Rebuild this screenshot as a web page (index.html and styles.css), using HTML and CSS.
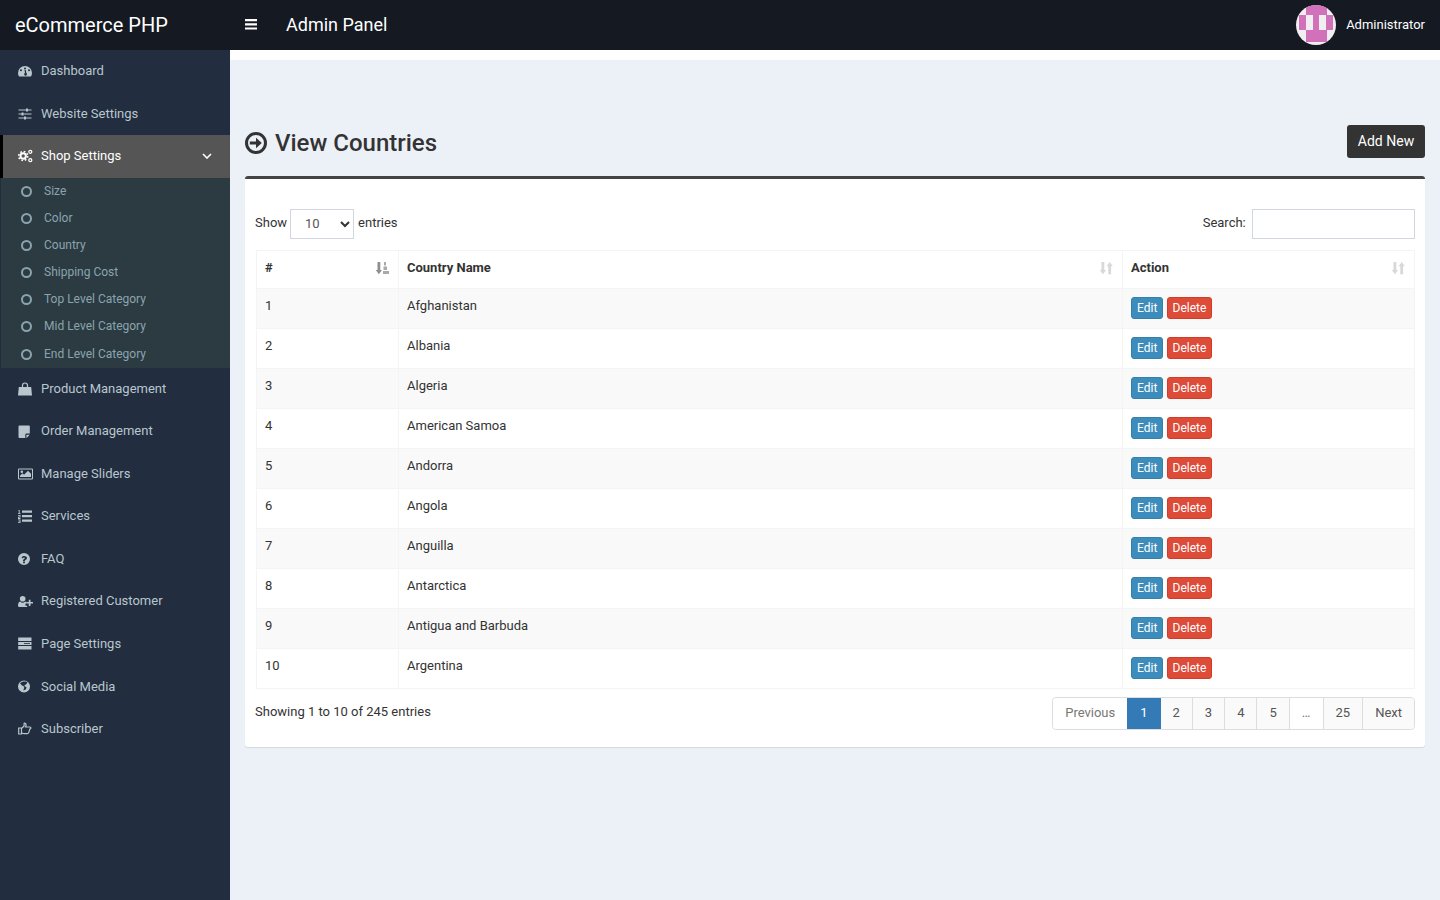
FILE: index.html
```html
<!DOCTYPE html>
<html lang="en">
<head>
  <meta charset="UTF-8" />
  <meta name="viewport" content="width=device-width, initial-scale=1.0" />
  <title>View Countries</title>
  <link rel="stylesheet" href="styles.css">
</head>
<body>
  <header class="topbar">
    <div class="logo">eCommerce PHP</div>
    <div class="topbar-main">
      <svg class="burger" viewBox="0 0 12 11"><path d="M0 0h12v2.200H0zM0 4.200h12v2.200H0zM0 8.400h12v2.200H0z"/></svg>
      <span class="panel-title">Admin Panel</span>
      <div class="user">
        <svg class="avatar" viewBox="0 0 40 40">
          <clipPath id="avatarClip"><circle cx="20" cy="20" r="20"/></clipPath>
          <circle cx="20" cy="20" r="20" fill="#f1eef1"/>
          <path clip-path="url(#avatarClip)" fill="#d071b9" d="M10 0h21v10h6v15h-7V10h-7v15h-6V10h-7v15H3V10h7zM10 25h21v12H10z"/>
        </svg>
        <span>Administrator</span>
      </div>
    </div>
  </header>

  <div class="layout">
    <aside class="sidebar">
      <ul class="menu">
        <li><a href="#"><svg class="ico" viewBox="0 0 14 14"><path d="M7 2a7 7 0 0 0-7 7c0 1.300.3 2.400 1 3.400h12c.7-1 1-2.100 1-3.400a7 7 0 0 0-7-7zM3 5.200a1 1 0 1 1 0 2 1 1 0 0 1 0-2zm4-1.600a1 1 0 1 1 0 2 1 1 0 0 1 0-2zm4 1.600a1 1 0 1 1 0 2 1 1 0 0 1 0-2zM7.800 6 8.300 9a1.400 1.400 0 1 1-1.300-.1L6.600 6z" fill-rule="evenodd"/></svg>Dashboard</a></li>
        <li><a href="#"><svg class="ico" viewBox="0 0 14 14"><path d="M.5 2.400h13v1.200H.5zM.5 6.400h13v1.200H.5zM.5 10.400h13v1.200H.5z"/><path d="M8 1.500h2v3H8zM3.500 5.500h2v3h-2zM6 9.500h2v3H6z"/></svg>Website Settings</a></li>
        <li class="open">
          <a href="#"><svg class="ico ico-gears" viewBox="0 0 15 14"><g fill="none" stroke="#fff"><circle cx="5.200" cy="7" r="2.700" stroke-width="2"/><circle cx="5.200" cy="7" r="4.500" stroke-width="1.600" stroke-dasharray="1.700 1.830"/><circle cx="12.300" cy="2.800" r="1.500" stroke-width="1.300"/><circle cx="12.300" cy="11.200" r="1.500" stroke-width="1.300"/></g></svg>Shop Settings<svg class="chev" viewBox="0 0 10 6"><path d="M1 1l4 4 4-4" fill="none" stroke="#fff" stroke-width="1.600"/></svg></a>
          <ul class="submenu">
            <li><a href="#"><i class="ring"></i>Size</a></li>
            <li><a href="#"><i class="ring"></i>Color</a></li>
            <li><a href="#"><i class="ring"></i>Country</a></li>
            <li><a href="#"><i class="ring"></i>Shipping Cost</a></li>
            <li><a href="#"><i class="ring"></i>Top Level Category</a></li>
            <li><a href="#"><i class="ring"></i>Mid Level Category</a></li>
            <li><a href="#"><i class="ring"></i>End Level Category</a></li>
          </ul>
        </li>
        <li><a href="#"><svg class="ico" viewBox="0 0 14 14"><path d="M.8 5h12.400l.8 8.500H0z"/><path d="M4.500 5V3.500a2.500 2.500 0 0 1 5 0V5" fill="none" stroke="#b8c7ce" stroke-width="1.200"/></svg>Product Management</a></li>
        <li><a href="#"><svg class="ico" viewBox="0 0 14 14"><path d="M.5 1.500a1 1 0 0 1 1-1H11a.8.8 0 0 1 .8.800v7.200H8.500a1.200 1.200 0 0 0-1.200 1.200v3.300H1.500a1 1 0 0 1-1-1zM8.400 13.200V9.800h3.300z"/></svg>Order Management</a></li>
        <li><a href="#"><svg class="ico ico-wide" viewBox="0 0 15 14"><path d="M1 1.500h13a1 1 0 0 1 1 1v9a1 1 0 0 1-1 1H1a1 1 0 0 1-1-1v-9a1 1 0 0 1 1-1zm0 1v9h13v-9zM2 10V8.800L4.500 6.300 6 7.800l4-4 3 3V10zM3.800 3.500a1.300 1.300 0 1 1 0 2.600 1.300 1.300 0 0 1 0-2.600z" fill-rule="evenodd"/></svg>Manage Sliders</a></li>
        <li><a href="#"><svg class="ico" viewBox="0 1 14 14"><path d="M4 1.500h10v2.200H4zM4 6h10v2.200H4zM4 10.500h10v2.200H4zM.4 1h1.300v3.200h.8V5H0v-.8h.8V1.800H.4zM0 6h2.500v2.400H.9v.7h1.600V10H0V7.700h1.600v-.9H0zM0 10.500h2.500V14H0v-.7h1.600v-.7H.6V12h1v-.7H0z"/></svg>Services</a></li>
        <li><a href="#"><svg class="ico" viewBox="0 0 14 14"><path d="M6 1a6 6 0 1 1 0 12A6 6 0 0 1 6 1zM5.100 9.600v1.700h1.800V9.600zM3.500 5.600l1.300.8c.3-.6.600-1 1.200-1 .5 0 .9.300.9.700 0 .5-.4.700-.9 1-.6.4-1 .9-1 1.600v.3h1.900c0-.6.200-.9.800-1.200.7-.5 1.300-1 1.300-1.900C9 4.800 7.500 4 6.100 4c-1.200 0-2 .5-2.600 1.600z" fill-rule="evenodd"/></svg>FAQ</a></li>
        <li><a href="#"><svg class="ico ico-wide" viewBox="0 1 16 14"><path d="M5 1.500a3 3 0 1 1 0 6 3 3 0 0 1 0-6zM0 12.500c0-3 .6-4.700 2.300-5a3.800 3.800 0 0 0 5.400 0c.6.100 1.100.4 1.500.9v1.100H8v2.500h1.800v1.200H1z"/><path d="M11.500 5.500h1.800v2.400H16v1.800h-2.700v2.500h-1.800V9.700H9V7.900h2.500z"/></svg>Registered Customer</a></li>
        <li><a href="#"><svg class="ico" viewBox="0 .5 14 14"><path d="M.2 1h13.300v3.500H.2zM.2 5.500h13.300v3H.2zM.2 9.500h13.300V13H.2z"/><path d="M6 6.600h6v.8H6z" fill="#222d3f"/></svg>Page Settings</a></li>
        <li><a href="#"><svg class="ico" viewBox="0 .5 14 14"><path d="M6 1a6 6 0 1 1 0 12A6 6 0 0 1 6 1zM2 4c1 .5 1.200 1.500 2.200 2 1 .6 2 .8 2 2s-.8 1.500-.7 3c1.500-.3 3-1.500 3-3 0-1-1.500-.8-2-1.500-.4-.6.5-1 1.500-1.500L9.500 3C8 1.700 4 1.500 2 4z" fill-rule="evenodd"/></svg>Social Media</a></li>
        <li><a href="#"><svg class="ico" viewBox="0 .5 14 14"><path d="M.7 6.500h2.800v6H.7zM3.500 7l2.600-2.600V2c0-.7 2-.6 2 1.500 0 .8-.4 1.400-.6 2H12c1.200 0 1.200 2-.2 2-.3 1.500-.7 2.300-1.100 3.600-.3.8-.8 1-1.500 1H5.800c-1 0-1.500-.6-2.300-.7" fill="none" stroke="#b8c7ce" stroke-width="1.200"/></svg>Subscriber</a></li>
      </ul>
    </aside>

    <main class="content">
      <div class="page-head">
        <h1><svg class="head-ico" viewBox="0 0 24 24"><circle cx="12" cy="12" r="9.500" fill="none" stroke="#333" stroke-width="3"/><path d="M5.800 10.400H12V6.800l5.800 5.200-5.800 5.200v-3.600H5.800z" fill="#333"/></svg>View Countries</h1>
        <a class="btn-add" href="#">Add New</a>
      </div>

      <section class="box">
        <div class="table-top">
          <label class="length-label">Show
            <select class="length"><option>10</option></select>
            entries</label>
          <label class="search">Search: <input type="text" /></label>
        </div>

        <table class="data">
          <colgroup><col class="col-num"><col class="col-name"><col></colgroup>
          <thead>
            <tr>
              <th># <svg class="sort sort-on" viewBox="0 0 14 14"><path d="M2.500 1h2.800v8h1.700L3.900 13.200.8 9h1.700z" fill="#8f8f8f"/><path d="M9 1h2v3.500H9zM8.500 5.500h3.500V9H8.500zM8 10h6v3H8z" fill="#aaa"/></svg></th>
              <th>Country Name <svg class="sort" viewBox="0 0 14 14"><path d="M2.500 1h2.800v8h1.700L3.900 13.200.8 9h1.700zM9.300 13.200v-8H7.600L10.700 1l3.100 4.200h-1.700v8z"/></svg></th>
              <th>Action <svg class="sort" viewBox="0 0 14 14"><path d="M2.500 1h2.800v8h1.700L3.900 13.200.8 9h1.700zM9.300 13.200v-8H7.600L10.700 1l3.100 4.200h-1.700v8z"/></svg></th>
            </tr>
          </thead>
          <tbody>
            <tr><td>1</td><td>Afghanistan</td><td><a class="btn edit" href="#">Edit</a> <a class="btn del" href="#">Delete</a></td></tr>
            <tr><td>2</td><td>Albania</td><td><a class="btn edit" href="#">Edit</a> <a class="btn del" href="#">Delete</a></td></tr>
            <tr><td>3</td><td>Algeria</td><td><a class="btn edit" href="#">Edit</a> <a class="btn del" href="#">Delete</a></td></tr>
            <tr><td>4</td><td>American Samoa</td><td><a class="btn edit" href="#">Edit</a> <a class="btn del" href="#">Delete</a></td></tr>
            <tr><td>5</td><td>Andorra</td><td><a class="btn edit" href="#">Edit</a> <a class="btn del" href="#">Delete</a></td></tr>
            <tr><td>6</td><td>Angola</td><td><a class="btn edit" href="#">Edit</a> <a class="btn del" href="#">Delete</a></td></tr>
            <tr><td>7</td><td>Anguilla</td><td><a class="btn edit" href="#">Edit</a> <a class="btn del" href="#">Delete</a></td></tr>
            <tr><td>8</td><td>Antarctica</td><td><a class="btn edit" href="#">Edit</a> <a class="btn del" href="#">Delete</a></td></tr>
            <tr><td>9</td><td>Antigua and Barbuda</td><td><a class="btn edit" href="#">Edit</a> <a class="btn del" href="#">Delete</a></td></tr>
            <tr><td>10</td><td>Argentina</td><td><a class="btn edit" href="#">Edit</a> <a class="btn del" href="#">Delete</a></td></tr>
          </tbody>
        </table>

        <div class="table-bottom">
          <div class="info">Showing 1 to 10 of 245 entries</div>
          <ul class="pagination">
            <li class="off"><a href="#">Previous</a></li>
            <li class="active"><a href="#">1</a></li>
            <li><a href="#">2</a></li>
            <li><a href="#">3</a></li>
            <li><a href="#">4</a></li>
            <li><a href="#">5</a></li>
            <li class="off"><a href="#">…</a></li>
            <li><a href="#">25</a></li>
            <li><a href="#">Next</a></li>
          </ul>
        </div>
      </section>
    </main>
  </div>
</body>
</html>
```

FILE: styles.css
```css
/* General */
* {
  box-sizing: border-box;
}

body {
  margin: 0;
  font-family: Roboto, "Liberation Sans", sans-serif;
  font-size: 14px;
  line-height: 20px;
  color: #333;
  background: #ecf0f7;
}

a {
  text-decoration: none;
  color: inherit;
}

ul {
  list-style: none;
  margin: 0;
  padding: 0;
}

/* Top bar */
.topbar {
  display: flex;
  height: 50px;
  background: #141922;
  color: #fff;
}

.logo {
  width: 230px;
  padding-left: 15px;
  font-size: 20px;
  line-height: 50px;
}

.topbar-main {
  flex: 1;
  display: flex;
  align-items: center;
  padding: 0 15px;
}

.burger {
  width: 12px;
  height: 11px;
  fill: #fff;
  margin: 0 29px 2px 0;
}

.panel-title {
  font-size: 18px;
}

.user {
  margin-left: auto;
  display: flex;
  align-items: center;
  gap: 10px;
  font-size: 13px;
}

.avatar {
  width: 40px;
  height: 40px;
}

/* Sidebar */
.layout {
  display: flex;
  min-height: 850px;
}

.sidebar {
  width: 230px;
  flex-shrink: 0;
  background: #222d3f;
}

.menu > li > a {
  display: flex;
  align-items: center;
  padding: 12px 0 12px 18px;
  font-size: 13px;
  line-height: 18.57px;
  color: #b8c7ce;
}

.ico {
  width: 14px;
  height: 14px;
  fill: #b8c7ce;
  margin-right: 9px;
  flex-shrink: 0;
}

.ico-wide {
  width: 15px;
  margin-right: 8px;
}

.menu > .open > a {
  background: #555;
  color: #fff;
  border-left: 3px solid #000;
  padding-left: 15px;
}

.open .ico {
  fill: #fff;
}

.ico-gears {
  width: 15px;
  margin-right: 8px;
}

.chev {
  width: 10px;
  height: 6px;
  margin-left: auto;
  margin-right: 18px;
}

.submenu {
  background: #2c3b41;
  margin-left: 1px;
}

.submenu a {
  display: flex;
  align-items: center;
  padding: 5px 0 5px 20px;
  font-size: 12px;
  line-height: 17.14px;
  color: #8aa4af;
}

.ring {
  width: 11px;
  height: 11px;
  border: 2px solid #8aa4af;
  border-radius: 50%;
  margin-right: 12px;
}

/* Content */
.content {
  flex: 1;
  min-width: 0;
  border-top: 10px solid #fff;
  padding: 0 15px;
}

.page-head {
  display: flex;
  justify-content: space-between;
  align-items: flex-end;
  height: 98px;
  margin-bottom: 18px;
}

h1 {
  display: flex;
  align-items: center;
  gap: 7px;
  margin: 0 0 0 -1px;
  font-size: 24px;
  font-weight: 500;
  line-height: 30px;
}

.head-ico {
  width: 24px;
  height: 24px;
}

.btn-add {
  display: block;
  width: 78px;
  height: 33px;
  line-height: 32px;
  text-align: center;
  background: #333;
  border-radius: 3px;
  color: #fff;
}

.box {
  background: #fff;
  border-top: 3px solid #444;
  border-radius: 3px;
  box-shadow: 0 1px 1px rgba(0, 0, 0, 0.1);
  padding: 30px 10px 17px;
  height: 571px;
}

.table-top {
  display: flex;
  justify-content: space-between;
  align-items: center;
  height: 30px;
  font-size: 13px;
  margin-bottom: 11px;
}

.length-label {
  display: flex;
  align-items: center;
  gap: 3px;
  height: 30px;
  padding-bottom: 3px;
}

.length {
  appearance: none;
  flex-shrink: 0;
  width: 64px;
  height: 30px;
  margin: 0 1px -3px 0;
  padding-left: 14px;
  font: inherit;
  color: #555;
  background: #fff url("data:image/svg+xml,%3Csvg xmlns='http://www.w3.org/2000/svg' viewBox='0 0 10 7'%3E%3Cpath d='M1 1l4 4 4-4' fill='none' stroke='%23333' stroke-width='2'/%3E%3C/svg%3E") no-repeat right 3px center / 10px 7px;
  border: 1px solid #d2d6de;
}

.search input {
  width: 163px;
  height: 30px;
  margin-left: 3px;
  border: 1px solid #d2d6de;
  vertical-align: middle;
}

/* Table */
.data {
  width: calc(100% - 1px);
  margin-left: 1px;
  table-layout: fixed;
  border-collapse: collapse;
  border: 1px solid #f4f4f4;
  font-size: 13px;
}

.col-num {
  width: 142px;
}

.col-name {
  width: 724px;
}

.data th,
.data td {
  border: 1px solid #f4f4f4;
  padding: 7px 8px;
  text-align: left;
  vertical-align: top;
}

.data th {
  position: relative;
  height: 38px;
  font-weight: 700;
}

.data td {
  height: 40px;
}

.data td:last-child {
  padding-top: 8px;
}

.data tbody tr:nth-child(odd) {
  background: #f9f9f9;
}

.sort {
  position: absolute;
  right: 9px;
  top: 10px;
  width: 14px;
  height: 14px;
  fill: #d8d8d8;
}

.btn {
  display: inline-block;
  height: 22px;
  padding: 0 5px;
  font-size: 12px;
  line-height: 20px;
  color: #fff;
  border: 1px solid;
  border-radius: 3px;
}

.edit {
  background: #3c8dbc;
  border-color: #367fa9;
}

.del {
  background: #dd4b39;
  border-color: #d73925;
}

/* Footer row */
.table-bottom {
  display: flex;
  justify-content: space-between;
  margin-top: 8px;
  font-size: 13px;
}

.info {
  padding-top: 5px;
}

.pagination {
  display: flex;
  height: 33px;
  border: 1px solid #ddd;
  border-radius: 4px;
  color: #555;
}

.pagination li {
  border-left: 1px solid #ddd;
  background: #fafafa;
}

.pagination li:first-child {
  border-left: 0;
  border-radius: 4px 0 0 4px;
}

.pagination li:last-child {
  border-radius: 0 4px 4px 0;
}

.pagination a {
  display: block;
  padding: 0 12px;
  line-height: 29px;
}

.pagination .off {
  background: #fff;
  color: #777;
}

.pagination .active {
  background: #337ab7;
  color: #fff;
  border-left: 0;
  margin-right: -1px;
  position: relative;
}

.pagination .active a {
  padding: 0 13px;
}
```
